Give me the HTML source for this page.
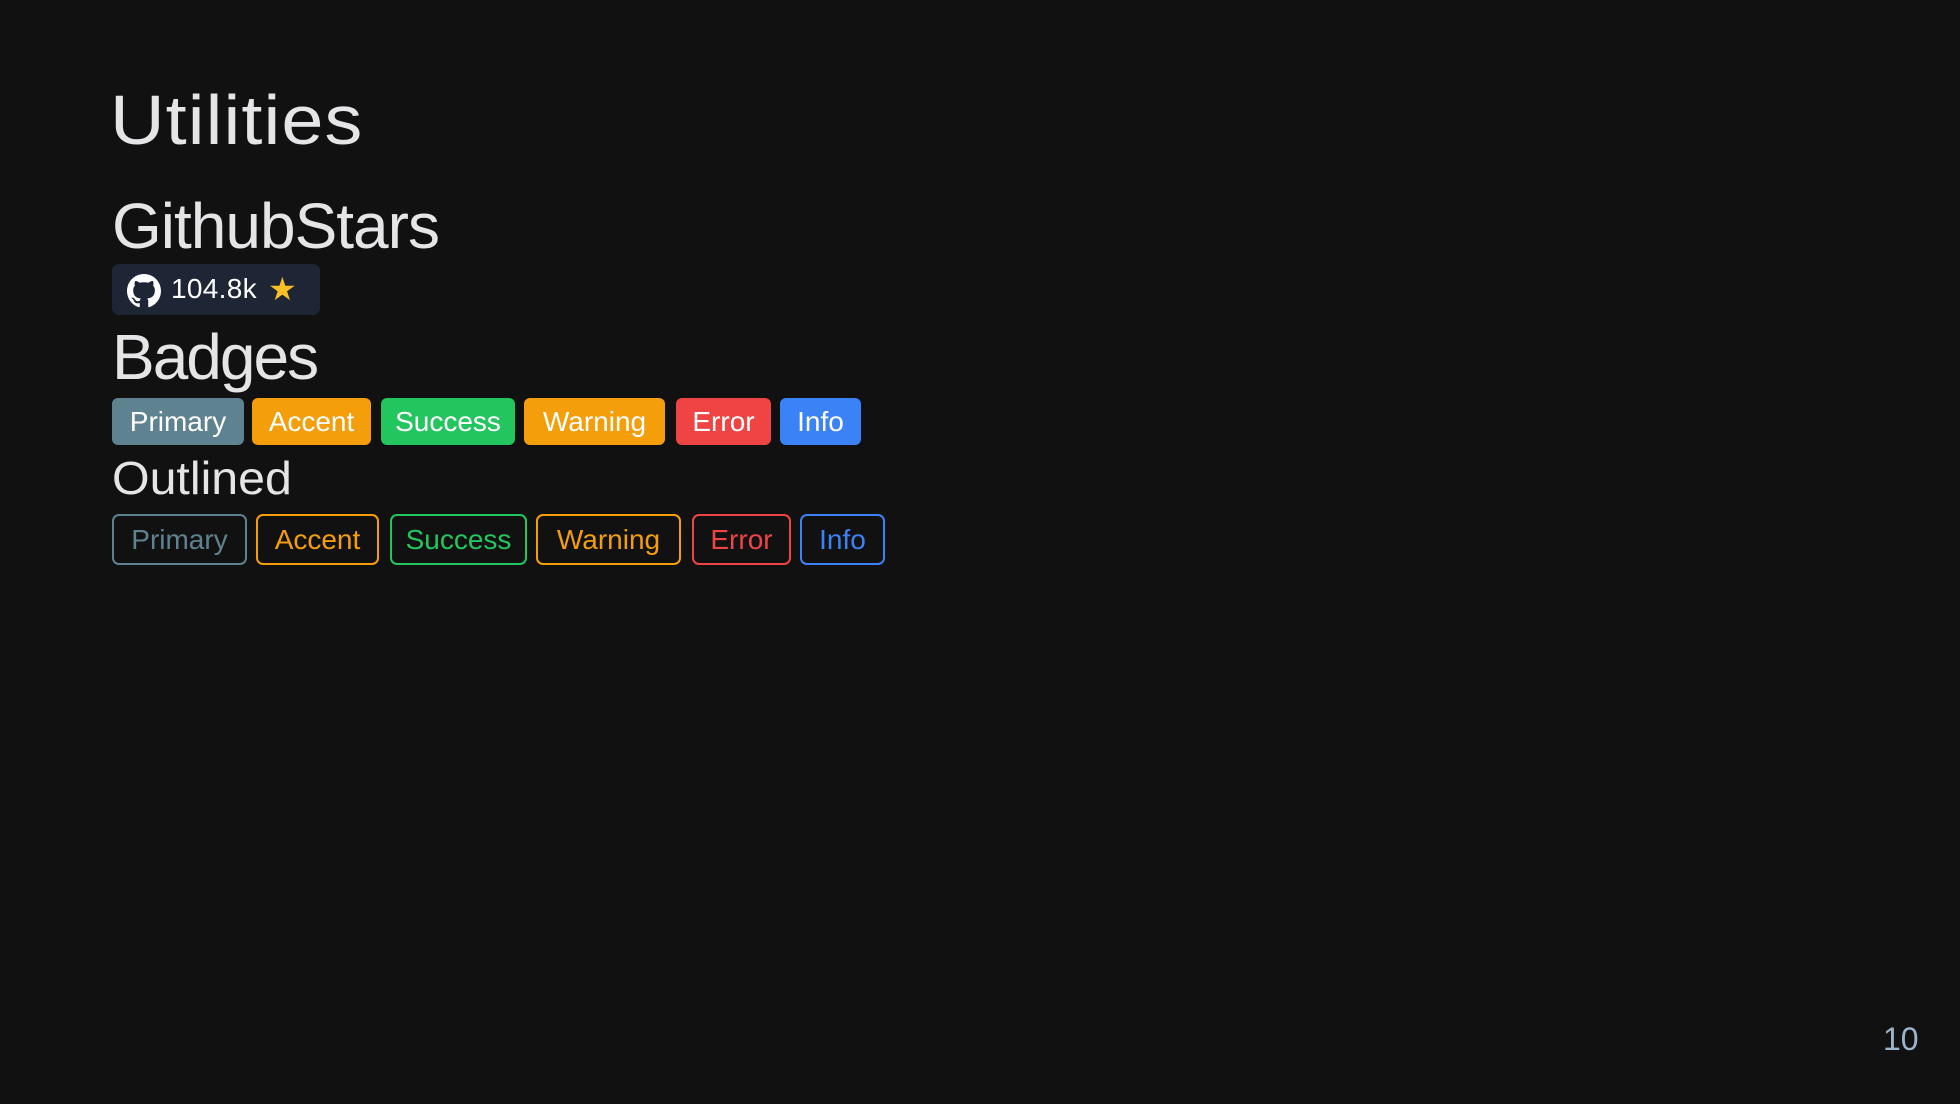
<!DOCTYPE html>
<html><head><meta charset="utf-8"><style>
*{margin:0;padding:0;box-sizing:border-box}
html,body{width:1960px;height:1104px;background:#111111;overflow:hidden;font-family:"Liberation Sans",sans-serif;color:#e5e5e7}
.a{position:absolute;white-space:nowrap}
.b{position:absolute;height:47px;border-radius:6px;display:flex;align-items:center;justify-content:center;font-size:28px;color:#fff}
.o{position:absolute;height:51px;border-radius:7px;border:2px solid;display:flex;align-items:center;justify-content:center;font-size:28px;background:transparent}
</style></head><body>
<div class="a" style="left:110px;top:80px;font-size:70px;letter-spacing:1px;transform:scaleX(1.08);transform-origin:left">Utilities</div>
<div class="a" style="left:112px;top:189px;font-size:64px;letter-spacing:-1px">GithubStars</div>
<div class="a" style="left:112px;top:264px;width:208px;height:51px;background:#1e2635;border-radius:7px"></div>
<svg class="a" style="left:127px;top:274px" width="34" height="34" viewBox="0 0 16 16"><path fill="#fff" d="M8 0C3.58 0 0 3.58 0 8c0 3.540 2.290 6.530 5.470 7.590.4.07.55-.17.55-.38 0-.19-.01-.82-.01-1.49-2.01.37-2.530-.49-2.690-.94-.09-.23-.48-.94-.82-1.130-.28-.15-.68-.52-.01-.53.63-.01 1.08.58 1.23.82.72 1.21 1.87.87 2.33.66.07-.52.28-.87.51-1.07-1.78-.2-3.64-.89-3.64-3.95 0-.87.31-1.59.82-2.15-.08-.2-.36-1.02.08-2.12 0 0 .67-.21 2.2.82.64-.18 1.32-.27 2-.27.68 0 1.36.09 2 .27 1.53-1.04 2.2-.82 2.2-.82.44 1.1.16 1.92.08 2.12.51.56.82 1.27.82 2.15 0 3.07-1.87 3.75-3.65 3.95.29.25.54.73.54 1.48 0 1.07-.01 1.93-.01 2.2 0 .21.15.46.55.38A8.013 8.013 0 0016 8c0-4.42-3.58-8-8-8z"/></svg>
<div class="a" style="left:171px;top:273px;font-size:28px;color:#fff;letter-spacing:0.3px">104.8k</div>
<div class="a" style="left:268px;top:270px;font-size:32px;color:#fbbf24">★</div>
<div class="a" style="left:112px;top:320px;font-size:64px;letter-spacing:-2px">Badges</div>
<div class="b" style="left:112px;top:398px;width:132px;background:#5f8290">Primary</div>
<div class="b" style="left:252px;top:398px;width:119px;background:#f59e0b">Accent</div>
<div class="b" style="left:381px;top:398px;width:134px;background:#22c55e">Success</div>
<div class="b" style="left:524px;top:398px;width:141px;background:#f59e0b">Warning</div>
<div class="b" style="left:676px;top:398px;width:95px;background:#ef4444">Error</div>
<div class="b" style="left:780px;top:398px;width:81px;background:#3b82f6">Info</div>
<div class="a" style="left:112px;top:451px;font-size:46px;transform:scaleX(1.05);transform-origin:left">Outlined</div>
<div class="o" style="left:112px;top:514px;width:135px;color:#5f8290;border-color:#5f8290">Primary</div>
<div class="o" style="left:256px;top:514px;width:123px;color:#f59e0b;border-color:#f59e0b">Accent</div>
<div class="o" style="left:390px;top:514px;width:137px;color:#22c55e;border-color:#22c55e">Success</div>
<div class="o" style="left:536px;top:514px;width:145px;color:#f59e0b;border-color:#f59e0b">Warning</div>
<div class="o" style="left:692px;top:514px;width:99px;color:#ef4444;border-color:#ef4444">Error</div>
<div class="o" style="left:800px;top:514px;width:85px;color:#3b82f6;border-color:#3b82f6">Info</div>
<div class="a" style="left:1883px;top:1021px;font-size:32px;color:#9bb5cc">10</div>
</body></html>
